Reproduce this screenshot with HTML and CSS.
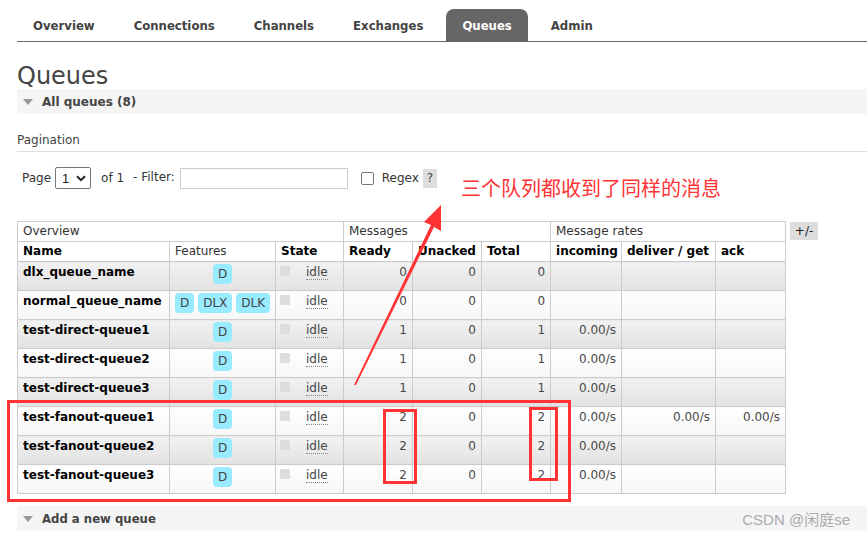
FILE: index.html
```html
<!DOCTYPE html>
<html>
<head>
<meta charset="utf-8">
<link rel="stylesheet" href="styles.css">
</head>
<body>
<div class="page">
  <nav class="nav">
    <a class="nav-item">Overview</a>
    <a class="nav-item">Connections</a>
    <a class="nav-item">Channels</a>
    <a class="nav-item">Exchanges</a>
    <a class="nav-item active">Queues</a>
    <a class="nav-item">Admin</a>
  </nav>

  <h1 class="title">Queues</h1>
  <div class="section-bar"><span class="tri"></span><span class="bar-text">All queues (8)</span></div>

  <div class="pagination-label">Pagination</div>
  <div class="filter-row">
    <span>Page</span>
    <span class="select">1 <svg width="10" height="7" viewBox="0 0 10 7"><path d="M1 1.2 L5 5.2 L9 1.2" fill="none" stroke="#222" stroke-width="2"/></svg></span>
    <span class="of">of 1</span>
    <span class="flt">- Filter:</span>
    <span class="input"></span>
    <span class="checkbox"></span>
    <span class="regex">Regex</span>
    <span class="help">?</span>
  </div>

  <div class="table-wrap">
    <table class="queues">
      <colgroup>
        <col style="width:152px"><col style="width:106px"><col style="width:68px">
        <col style="width:69px"><col style="width:69px"><col style="width:69px">
        <col style="width:71px"><col style="width:94px"><col style="width:70px">
      </colgroup>
      <thead>
        <tr class="group">
          <th colspan="3">Overview</th>
          <th colspan="3">Messages</th>
          <th colspan="3">Message rates</th>
        </tr>
        <tr class="cols">
          <th>Name</th><th class="normal">Features</th><th>State</th>
          <th>Ready</th><th>Unacked</th><th>Total</th>
          <th>incoming</th><th>deliver / get</th><th>ack</th>
        </tr>
      </thead>
      <tbody>
        <tr class="odd"><td class="name">dlx_queue_name</td><td class="feat"><span class="badge">D</span></td><td class="state"><span class="sq"></span><span class="idle">idle</span></td><td class="num">0</td><td class="num">0</td><td class="num">0</td><td></td><td></td><td></td></tr>
        <tr class="even"><td class="name">normal_queue_name</td><td class="feat"><span class="badge">D</span><span class="badge">DLX</span><span class="badge">DLK</span></td><td class="state"><span class="sq"></span><span class="idle">idle</span></td><td class="num">0</td><td class="num">0</td><td class="num">0</td><td></td><td></td><td></td></tr>
        <tr class="odd"><td class="name">test-direct-queue1</td><td class="feat"><span class="badge">D</span></td><td class="state"><span class="sq"></span><span class="idle">idle</span></td><td class="num">1</td><td class="num">0</td><td class="num">1</td><td class="num">0.00/s</td><td></td><td></td></tr>
        <tr class="even"><td class="name">test-direct-queue2</td><td class="feat"><span class="badge">D</span></td><td class="state"><span class="sq"></span><span class="idle">idle</span></td><td class="num">1</td><td class="num">0</td><td class="num">1</td><td class="num">0.00/s</td><td></td><td></td></tr>
        <tr class="odd"><td class="name">test-direct-queue3</td><td class="feat"><span class="badge">D</span></td><td class="state"><span class="sq"></span><span class="idle">idle</span></td><td class="num">1</td><td class="num">0</td><td class="num">1</td><td class="num">0.00/s</td><td></td><td></td></tr>
        <tr class="even"><td class="name">test-fanout-queue1</td><td class="feat"><span class="badge">D</span></td><td class="state"><span class="sq"></span><span class="idle">idle</span></td><td class="num">2</td><td class="num">0</td><td class="num">2</td><td class="num">0.00/s</td><td class="num">0.00/s</td><td class="num">0.00/s</td></tr>
        <tr class="odd"><td class="name">test-fanout-queue2</td><td class="feat"><span class="badge">D</span></td><td class="state"><span class="sq"></span><span class="idle">idle</span></td><td class="num">2</td><td class="num">0</td><td class="num">2</td><td class="num">0.00/s</td><td></td><td></td></tr>
        <tr class="even"><td class="name">test-fanout-queue3</td><td class="feat"><span class="badge">D</span></td><td class="state"><span class="sq"></span><span class="idle">idle</span></td><td class="num">2</td><td class="num">0</td><td class="num">2</td><td class="num">0.00/s</td><td></td><td></td></tr>
      </tbody>
    </table>
    <span class="plusminus">+/-</span>
  </div>

  <div class="section-bar add"><span class="tri"></span><span class="bar-text cond">Add a new queue</span><span class="watermark">CSDN @闲庭se</span></div>
</div>

<div class="note">三个队列都收到了同样的消息</div>
<svg class="marks" width="867" height="537" viewBox="0 0 867 537">
  <polygon points="354,385 356,385 434,227 441,231 441,205 424,222 431,225" fill="#f33"/>
  <rect x="8.5" y="401.5" width="561" height="99" fill="none" stroke="#f33" stroke-width="3"/>
  <rect x="384.5" y="410.5" width="31" height="72" fill="none" stroke="#f33" stroke-width="3"/>
  <rect x="530.5" y="408.5" width="26" height="71" fill="none" stroke="#f33" stroke-width="3"/>
</svg>
</body>
</html>
```

FILE: styles.css
```css
html, body {
  margin: 0;
  padding: 0;
  background: #fff;
}
body {
  font-family: "DejaVu Sans", Verdana, sans-serif;
  font-size: 12px;
  color: #484848;
  position: relative;
  width: 867px;
  height: 537px;
  overflow: hidden;
}
.page {
  padding: 9px 0 0 17px;
}
.nav {
  display: flex;
  gap: 7px;
  height: 32px;
  border-bottom: 1px solid #666;
}
.nav-item {
  font-family: "DejaVu Sans Condensed", "DejaVu Sans", sans-serif;
  font-weight: bold;
  font-size: 13px;
  color: #444;
  padding: 0 16px;
  line-height: 33px;
  border-radius: 8px 8px 0 0;
}
.nav-item.active {
  background: #666;
  color: #fff;
}
.title {
  margin: 21px 0 0 0;
  font-weight: normal;
  font-size: 24px;
  line-height: 26px;
  color: #444;
  height: 26px;
}
.section-bar {
  display: flex;
  align-items: center;
  height: 25px;
  background: #f5f5f5;
  padding-left: 6px;
}
.tri {
  width: 0;
  height: 0;
  border-left: 5px solid transparent;
  border-right: 5px solid transparent;
  border-top: 6px solid #999;
  margin-right: 9px;
  margin-top: 1px;
}
.bar-text {
  font-weight: bold;
  font-size: 12px;
  color: #444;
}
.bar-text.cond {
  font-family: "DejaVu Sans Condensed", "DejaVu Sans", sans-serif;
  font-size: 13px;
}
.pagination-label {
  margin-top: 19px;
  font-size: 12px;
  color: #444;
  padding-bottom: 3px;
  border-bottom: 1px solid #ddd;
  line-height: 15px;
}
.filter-row {
  display: flex;
  align-items: center;
  height: 22px;
  margin-top: 15px;
  padding-left: 5px;
  color: #333;
  font-size: 12px;
}
.select {
  display: inline-flex;
  align-items: center;
  justify-content: space-between;
  box-sizing: border-box;
  width: 36px;
  height: 22px;
  border: 1px solid #767676;
  border-radius: 2px;
  margin-left: 4px;
  padding: 0 4px 0 6px;
  font-size: 13px;
  color: #222;
  font-family: "Liberation Sans", sans-serif;
}
.of { margin-left: 10px; }
.flt { margin-left: 9px; position: relative; top: -1px; }
.input {
  box-sizing: border-box;
  width: 168px;
  height: 21px;
  border: 1px solid #ccc;
  margin-left: 5px;
}
.checkbox {
  box-sizing: border-box;
  width: 13px;
  height: 13px;
  border: 1px solid #767676;
  border-radius: 2px;
  margin-left: 13px;
}
.regex { margin-left: 8px; }
.help {
  margin-left: 4px;
  background: #ddd;
  width: 14px;
  height: 19px;
  line-height: 19px;
  text-align: center;
  color: #444;
}
.table-wrap {
  display: flex;
  align-items: flex-start;
  margin-top: 32px;
}
.queues {
  border-collapse: collapse;
  table-layout: fixed;
  width: 768px;
}
.queues th, .queues td {
  border: 1px solid #ccc;
  padding: 0 5px;
  text-align: left;
  vertical-align: top;
  overflow: hidden;
  white-space: nowrap;
}
.queues th {
  height: 19px;
  line-height: 19px;
  font-size: 12px;
  background: #fff;
}
.group th {
  font-weight: normal;
  color: #333;
}
.cols th {
  font-weight: bold;
  color: #000;
}
.cols th.normal {
  font-weight: normal;
  color: #333;
}
.queues td {
  height: 29px;
  line-height: 15px;
  padding-top: 3px;
  box-sizing: border-box;
}
.odd td { background: linear-gradient(#f2f2f2, #e2e2e2); }
.even td { background: linear-gradient(#ffffff, #f6f6f6); }
.name {
  font-weight: bold;
  color: #000;
}
.num {
  text-align: right !important;
  color: #484848;
}
.feat {
  text-align: center !important;
  padding: 2px 0 0 0 !important;
}
.badge {
  display: inline-block;
  background: #99ebff;
  color: #444;
  border-radius: 4px;
  padding: 0 5px;
  height: 20px;
  line-height: 21px;
  margin: 0 2px;
  font-size: 12px;
}
.state {
  padding-left: 4px !important;
}
.sq {
  display: inline-block;
  width: 10px;
  height: 10px;
  background: #ddd;
  vertical-align: top;
  margin-top: 1px;
}
.idle {
  display: inline-block;
  margin-left: 16px;
  color: #444;
  border-bottom: 1px dotted #888;
  line-height: 14px;
}
.plusminus {
  margin-left: 4px;
  margin-top: 1px;
  background: #ddd;
  width: 28px;
  height: 18px;
  line-height: 18px;
  text-align: center;
  color: #222;
  font-size: 12px;
}
.section-bar.add {
  margin-top: 12px;
}
.watermark {
  margin-left: auto;
  margin-right: 17px;
  font-family: "Liberation Sans", "Noto Sans CJK SC", sans-serif;
  font-size: 15px;
  color: #aaa;
}
.note {
  position: absolute;
  left: 461px;
  top: 176px;
  font-family: "Noto Sans CJK SC", sans-serif;
  font-size: 20px;
  line-height: 24px;
  color: #f33;
}
.marks {
  position: absolute;
  left: 0;
  top: 0;
  pointer-events: none;
}
```
